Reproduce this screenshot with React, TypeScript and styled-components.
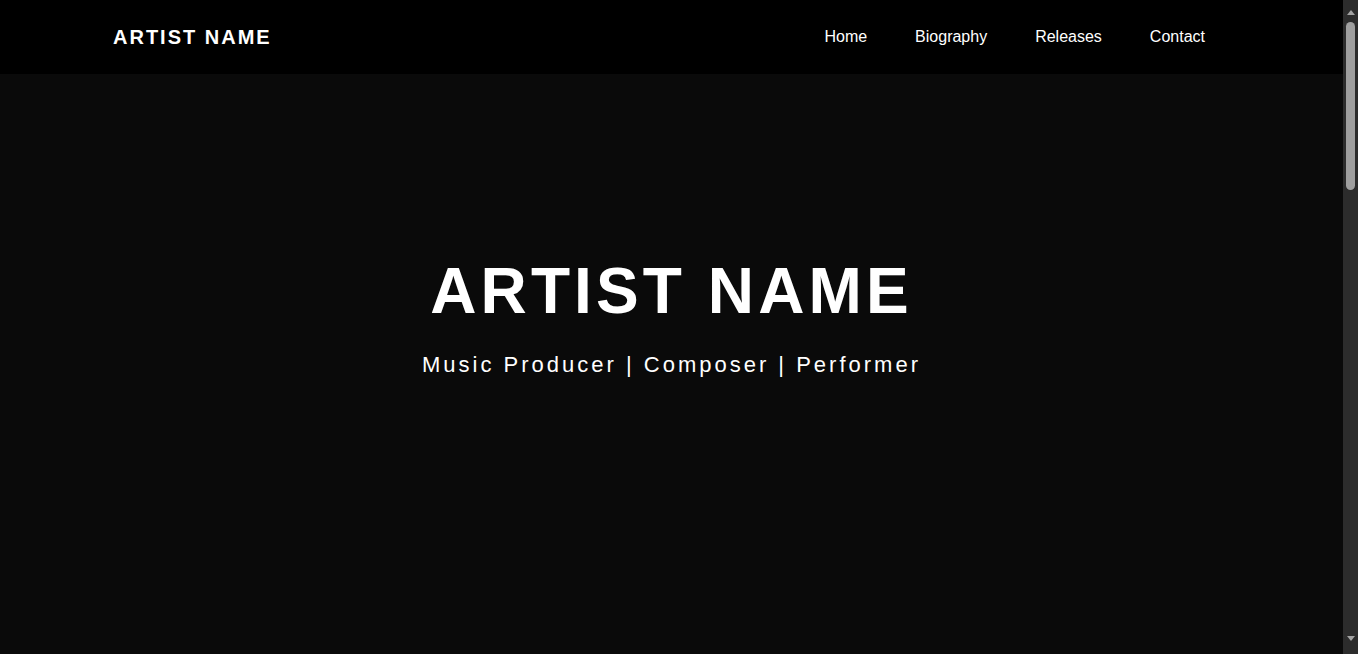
import React from "react";
import styled, { createGlobalStyle } from "styled-components";

const GlobalStyle = createGlobalStyle`
  * {
    box-sizing: border-box;
  }
  html, body {
    margin: 0;
    height: 100%;
    overflow: hidden;
  }
  body {
    background: #0a0a0a;
    color: #ffffff;
    font-family: "Liberation Sans", Arial, Helvetica, sans-serif;
  }
`;

const Frame = styled.div`
  display: flex;
  height: 100vh;
`;

const Main = styled.main`
  flex: 1;
  min-width: 0;
  display: flex;
  flex-direction: column;
  background: #0a0a0a;
`;

const Header = styled.header`
  height: 74px;
  flex-shrink: 0;
  background: #000000;
  display: flex;
  align-items: center;
  justify-content: space-between;
  padding: 0 122px 0 113px;
`;

const Logo = styled.div`
  font-size: 20px;
  font-weight: 700;
  letter-spacing: 2px;
  color: #ffffff;
`;

const NavList = styled.ul`
  list-style: none;
  margin: 0;
  padding: 0;
  display: flex;
  gap: 16px;
`;

const NavLink = styled.a`
  display: block;
  padding: 8px 16px;
  font-size: 16px;
  color: #ffffff;
  text-decoration: none;
`;

const Hero = styled.section`
  flex: 1;
  display: flex;
  flex-direction: column;
  align-items: center;
  justify-content: center;
  padding-bottom: 97px;
  text-align: center;
`;

const HeroTitle = styled.h1`
  margin: 0 0 24px;
  font-size: 64px;
  font-weight: 700;
  letter-spacing: 4.1px;
  line-height: normal;
`;

const HeroSubtitle = styled.p`
  margin: 0;
  font-size: 22px;
  letter-spacing: 3px;
  line-height: normal;
`;

const ScrollRail = styled.div`
  width: 15px;
  flex-shrink: 0;
  background: #2c2c2c;
  display: flex;
  flex-direction: column;
  align-items: center;
`;

const ArrowBox = styled.div<{ $dir: "up" | "down" }>`
  height: ${(p) => (p.$dir === "up" ? "15px" : "24px")};
  width: 100%;
  display: flex;
  justify-content: center;
  align-items: ${(p) => (p.$dir === "up" ? "flex-end" : "flex-start")};
  padding-top: ${(p) => (p.$dir === "up" ? "0" : "6px")};
`;

const Triangle = styled.span<{ $dir: "up" | "down" }>`
  width: 0;
  height: 0;
  border-left: 4.5px solid transparent;
  border-right: 4.5px solid transparent;
  ${(p) =>
    p.$dir === "up"
      ? "border-bottom: 5px solid #a3a3a3;"
      : "border-top: 5px solid #a3a3a3;"}
`;

const Thumb = styled.div`
  margin-top: 7px;
  width: 9px;
  height: 168px;
  border-radius: 5px;
  background: #9f9f9f;
`;

const RailSpacer = styled.div`
  flex: 1;
`;

const links = ["Home", "Biography", "Releases", "Contact"];

export default function App() {
  return (
    <>
      <GlobalStyle />
      <Frame>
        <Main>
          <Header>
            <Logo>ARTIST NAME</Logo>
            <nav>
              <NavList>
                {links.map((l) => (
                  <li key={l}>
                    <NavLink href={`#${l.toLowerCase()}`}>{l}</NavLink>
                  </li>
                ))}
              </NavList>
            </nav>
          </Header>
          <Hero id="home">
            <HeroTitle>ARTIST NAME</HeroTitle>
            <HeroSubtitle>Music Producer | Composer | Performer</HeroSubtitle>
          </Hero>
        </Main>
        <ScrollRail aria-hidden="true">
          <ArrowBox $dir="up">
            <Triangle $dir="up" />
          </ArrowBox>
          <Thumb />
          <RailSpacer />
          <ArrowBox $dir="down">
            <Triangle $dir="down" />
          </ArrowBox>
        </ScrollRail>
      </Frame>
    </>
  );
}
